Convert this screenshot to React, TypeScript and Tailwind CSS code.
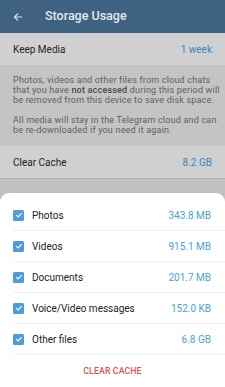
import React from 'react';

interface CacheItem {
  label: string;
  size: string;
}

const items: CacheItem[] = [
  { label: 'Photos', size: '343.8 MB' },
  { label: 'Videos', size: '915.1 MB' },
  { label: 'Documents', size: '201.7 MB' },
  { label: 'Voice/Video messages', size: '152.0 KB' },
  { label: 'Other files', size: '6.8 GB' },
];

const Check: React.FC = () => (
  <div className="w-[11px] h-[11px] rounded-[1.5px] bg-[#4a9ddf] flex items-center justify-center shrink-0">
    <svg width="8" height="8" viewBox="0 0 8 8">
      <path d="M1.3 4.1 L3.1 5.9 L6.7 2.2" fill="none" stroke="#fff" strokeWidth="1.2" />
    </svg>
  </div>
);

export default function App() {
  return (
    <div className="w-[225px] h-[387px] overflow-hidden bg-[#c1c1c1] flex flex-col font-['Roboto',sans-serif] relative">
      {/* header */}
      <div className="h-[33px] bg-[#3f6283] flex items-center px-[13px] shadow-[0_1px_1px_rgba(0,0,0,0.15)]">
        <svg width="10" height="10" viewBox="0 0 10 10" className="mr-[22px]">
          <path d="M9 5 H1.5 M5 1.5 L1.5 5 L5 8.5" fill="none" stroke="#d6dde4" strokeWidth="1.2" />
        </svg>
        <span className="text-[12.5px] font-medium text-[#e3e8ed]">Storage Usage</span>
      </div>

      <div className="h-[32px] bg-[#d0d0d0] flex items-center justify-between px-[13px] text-[10px]">
        <span className="text-[#1f1f1f]">Keep Media</span>
        <span className="text-[#3d86ba]">1 week</span>
      </div>

      {/* explanation, line breaks as on the device */}
      <div className="bg-[#c4c4c4] pl-[13px] pr-[4px] pt-[10px] pb-[11px] text-[9px] tracking-[0.2px] leading-[10px] text-[#606060] whitespace-nowrap">
        <p>
          Photos, videos and other files from cloud chats
          <br />
          that you have <b className="font-medium text-[#4a4a4a]">not accessed</b> during this period will
          <br />
          be removed from this device to save disk space.
        </p>
        <p className="mt-[10px]">
          All media will stay in the Telegram cloud and can
          <br />
          be re-downloaded if you need it again.
        </p>
      </div>

      <div className="h-[32px] bg-[#d0d0d0] flex items-center justify-between px-[13px] text-[10px] shadow-[0_1px_1px_rgba(0,0,0,0.08)]">
        <span className="text-[#1f1f1f]">Clear Cache</span>
        <span className="text-[#3d86ba]">8.2 GB</span>
      </div>

      {/* bottom sheet */}
      <div className="mt-auto h-[194px] bg-white rounded-t-[9px] pt-[7px] flex flex-col">
        {items.map((it) => (
          <div key={it.label} className="h-[31px] ml-[13px] flex items-center border-b border-[#f1f1f1] pr-[14px] text-[10px]">
            <Check />
            <span className="ml-[8px] text-[#222]">{it.label}</span>
            <span className="ml-auto text-[#4a9fd6]">{it.size}</span>
          </div>
        ))}
        <div className="flex-1 flex items-center justify-center text-[8.6px] font-medium text-[#d9534f] tracking-[0.2px]">
          CLEAR CACHE
        </div>
      </div>
    </div>
  );
}
